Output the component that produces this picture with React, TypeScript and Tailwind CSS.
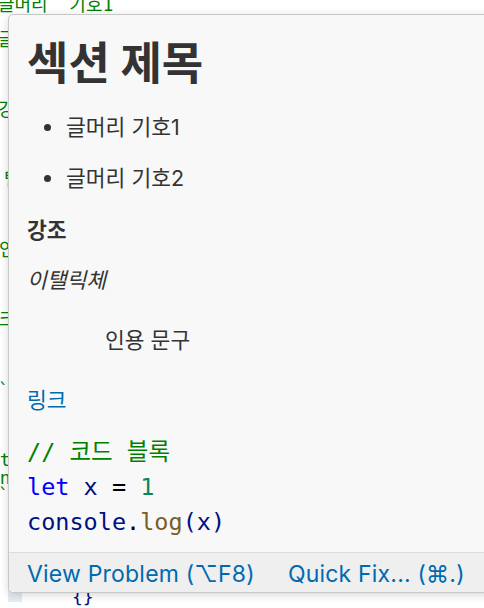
import React from 'react';

const sans = { fontFamily: 'Inter, "Noto Sans CJK KR", sans-serif' };
const mono = { fontFamily: '"DejaVu Sans Mono", "Noto Sans CJK KR", monospace' };

// lines of the editor that peek out from behind the hover
const editorLines: { text: string; cls: string }[] = [
  { text: '글머리  기호1', cls: '-ml-[2px]' },
  { text: '', cls: '' },
  { text: '글머리  기호2', cls: '-ml-[2px]' },
  { text: '', cls: '' },
  { text: '', cls: '' },
  { text: '', cls: '' },
  { text: '강조', cls: '-ml-[2px]' },
  { text: '', cls: '' },
  { text: '', cls: '' },
  { text: '', cls: '' },
  { text: '탤릭체', cls: 'ml-[4px]' },
  { text: '', cls: '' },
  { text: '', cls: '' },
  { text: '', cls: '' },
  { text: '인용 문구', cls: '-ml-[1px]' },
  { text: '', cls: '' },
  { text: '', cls: '' },
  { text: '', cls: '' },
  { text: '링크', cls: '-ml-[18px]' },
  { text: '', cls: '' },
  { text: '', cls: '' },
  { text: '', cls: '' },
  { text: '```', cls: '-ml-[2px]' },
  { text: '', cls: '' },
  { text: '', cls: '' },
  { text: '', cls: '' },
  { text: 'let x = 1', cls: '-ml-[22px]' },
  { text: 'console.log(x)', cls: '-ml-[22px]' },
  { text: '```', cls: '-ml-[2px]' },
];

const Editor: React.FC = () => (
  <div className="-mt-[4px] text-[18px] leading-[17.5px] text-[#008000]" style={mono}>
    {editorLines.map((line, i) => (
      <div key={i} className={`h-[17.5px] whitespace-pre ${line.cls}`}>
        {line.text}
      </div>
    ))}
    <div className="mt-[84px] flex items-start">
      <div className="ml-[8px] h-[14px] w-[14px] bg-[#e5ebf2]" />
      <div className="ml-[50px] text-[#001080]">{'{}'}</div>
    </div>
  </div>
);

const HoverWidget: React.FC = () => (
  <div
    className="absolute left-[8px] top-[14px] w-[540px] rounded-[5px] border border-[#c8c8c8] bg-[#f8f8f8] shadow-[0_2px_8px_rgba(0,0,0,0.16)]"
    style={sans}
  >
    <div className="pl-[18px] pt-[25px] text-[21.5px] leading-[30px] text-[#333333]">
      <h1 className="text-[45px] font-bold leading-[48px]">섹션 제목</h1>

      <ul className="mt-[24px]">
        <li className="flex items-center">
          <span className="ml-[17px] mr-[15px] h-[7px] w-[7px] rounded-full bg-[#333333]" />
          글머리 기호1
        </li>
        <li className="mt-[21px] flex items-center">
          <span className="ml-[17px] mr-[15px] h-[7px] w-[7px] rounded-full bg-[#333333]" />
          글머리 기호2
        </li>
      </ul>

      <p className="mt-[22px] font-bold">강조</p>
      <p className="mt-[20px] italic">이탤릭체</p>
      <blockquote className="mt-[30px] pl-[78px]">인용 문구</blockquote>
      <p className="mt-[30px]">
        <a className="text-[#006ab1]">링크</a>
      </p>

      <pre className="mt-[20px] text-[23.5px] leading-[35px]" style={mono}>
        <div className="text-[#008000]">// 코드 블록</div>
        <div>
          <span className="text-[#0000ff]">let</span>
          <span className="text-[#001080]"> x</span>
          <span className="text-[#000000]"> = </span>
          <span className="text-[#098658]">1</span>
        </div>
        <div>
          <span className="text-[#001080]">console</span>
          <span className="text-[#000000]">.</span>
          <span className="text-[#795e26]">log</span>
          <span className="text-[#001080]">(x)</span>
        </div>
      </pre>
    </div>

    <div className="mt-[12px] flex h-[40px] items-center gap-[33px] rounded-b-[5px] border-t border-[#dcdcdc] bg-[#efefef] pl-[18px] pt-[3px] text-[23px] tracking-[0.2px] text-[#006ab1]">
      <span>View Problem (⌥F8)</span>
      <span>Quick Fix... (⌘.)</span>
    </div>
  </div>
);

export default function App() {
  return (
    <div className="relative h-[608px] w-[484px] overflow-hidden bg-white">
      <Editor />
      <HoverWidget />
    </div>
  );
}
